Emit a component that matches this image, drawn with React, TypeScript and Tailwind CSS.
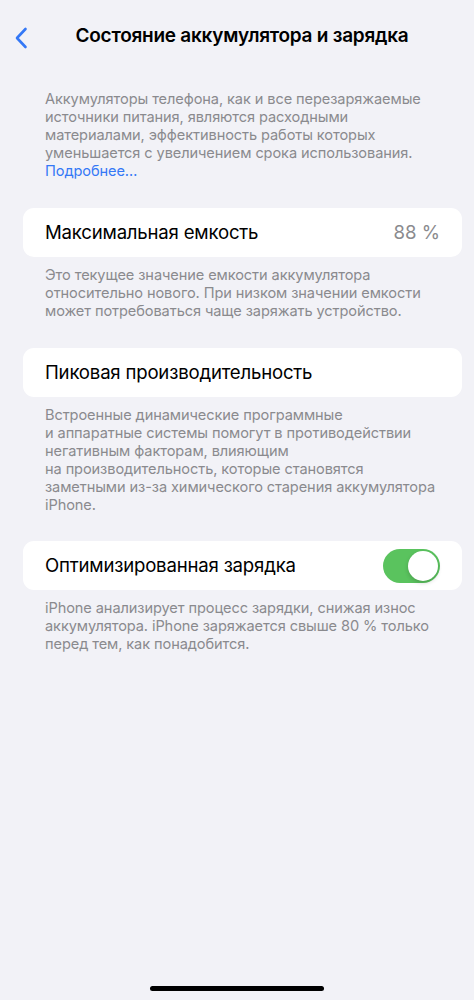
import { useState } from 'react'

const font = { fontFamily: 'Inter, "Noto Sans", sans-serif' }

function Footer({ lines }: { lines: string[] }) {
  return (
    <div className="px-[45px] pt-[9px] text-[14.6px] leading-[18px] text-[#8a8a8e] tracking-[-0.1px]">
      {lines.map((line) => (
        <div key={line} className="whitespace-nowrap">{line}</div>
      ))}
    </div>
  )
}

function Cell({ children }: { children: React.ReactNode }) {
  return (
    <div className="ml-[23px] mr-[12px] h-[49px] rounded-[11px] bg-white flex items-center justify-between pl-[22px] pr-[22px]">
      {children}
    </div>
  )
}

function Toggle({ on, onChange }: { on: boolean; onChange: (v: boolean) => void }) {
  return (
    <button
      onClick={() => onChange(!on)}
      className={`relative w-[57px] h-[34px] rounded-full transition-colors ${on ? 'bg-[#5ac35e]' : 'bg-[#e5e5ea]'}`}
    >
      <span
        className={`absolute top-[2px] h-[30px] w-[30px] rounded-full bg-white shadow-[0_2px_4px_rgba(0,0,0,0.18)] transition-all ${on ? 'left-[25px]' : 'left-[2px]'}`}
      />
    </button>
  )
}

export default function App() {
  const [optimized, setOptimized] = useState(true)

  return (
    <div className="min-h-[1000px] bg-[#f2f2f7] relative" style={font}>
      {/* Nav bar */}
      <div className="h-[72px] relative flex items-center justify-center pl-[10px]">
        <button className="absolute left-[13px] top-[26px] text-[#3478f6]">
          <svg width="16" height="24" viewBox="0 0 16 24" fill="none">
            <path d="M12.5 3 L4 12 L12.5 21" stroke="currentColor" strokeWidth="2.6" strokeLinecap="round" strokeLinejoin="round" />
          </svg>
        </button>
        <h1 className="text-[19px] font-semibold text-black tracking-[-0.25px]">
          Состояние аккумулятора и зарядка
        </h1>
      </div>

      {/* Intro */}
      <div className="px-[45px] pt-[18px] text-[14.6px] leading-[18px] text-[#8a8a8e] tracking-[-0.1px]">
        <div>Аккумуляторы телефона, как и все перезаряжаемые</div>
        <div>источники питания, являются расходными</div>
        <div>материалами, эффективность работы которых</div>
        <div className="whitespace-nowrap">уменьшается с увеличением срока использования.</div>
        <div className="text-[#3478f6]">Подробнее…</div>
      </div>

      <div className="mt-[28px]">
        <Cell>
          <span className="text-[18.6px] text-black tracking-[-0.2px]">Максимальная емкость</span>
          <span className="text-[18.6px] text-[#8a8a8e]">88 %</span>
        </Cell>
        <Footer
          lines={[
            'Это текущее значение емкости аккумулятора',
            'относительно нового. При низком значении емкости',
            'может потребоваться чаще заряжать устройство.',
          ]}
        />
      </div>

      <div className="mt-[28px]">
        <Cell>
          <span className="text-[18.6px] text-black tracking-[-0.2px]">Пиковая производительность</span>
        </Cell>
        <Footer
          lines={[
            'Встроенные динамические программные',
            'и аппаратные системы помогут в противодействии',
            'негативным факторам, влияющим',
            'на производительность, которые становятся',
            'заметными из-за химического старения аккумулятора',
            'iPhone.',
          ]}
        />
      </div>

      <div className="mt-[27px]">
        <Cell>
          <span className="text-[18.6px] text-black tracking-[-0.2px]">Оптимизированная зарядка</span>
          <Toggle on={optimized} onChange={setOptimized} />
        </Cell>
        <Footer
          lines={[
            'iPhone анализирует процесс зарядки, снижая износ',
            'аккумулятора. iPhone заряжается свыше 80 % только',
            'перед тем, как понадобится.',
          ]}
        />
      </div>

      {/* Home indicator */}
      <div className="absolute bottom-[9px] left-1/2 -translate-x-1/2 w-[174px] h-[5px] rounded-full bg-black" />
    </div>
  )
}
